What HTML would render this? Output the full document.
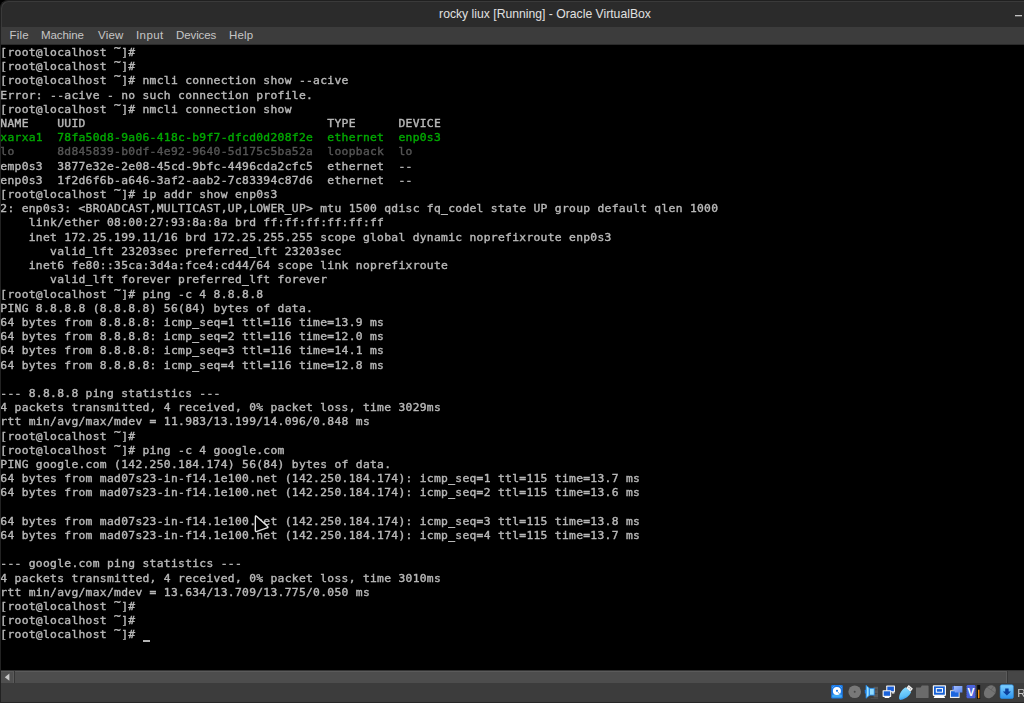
<!DOCTYPE html>
<html lang="en">
<head>
<meta charset="utf-8">
<title>rocky liux [Running] - Oracle VirtualBox</title>
<style>
html,body{margin:0;padding:0;background:#080808;}
body{width:1024px;height:703px;position:relative;overflow:hidden;font-family:"Liberation Sans","DejaVu Sans",sans-serif;}
#win{position:absolute;left:0;top:0;width:1024px;height:703px;background:#000;overflow:hidden;}
#titlebar{position:absolute;left:0;top:0;width:1100px;height:27px;background:#2b2b2b;border-top-left-radius:8px;border-top:1px solid #202020;border-left:1px solid #202020;box-sizing:border-box;box-shadow:inset 1px 1px 0 #3a3a3a;}
#title{position:absolute;left:0;top:0;width:1088px;height:26px;line-height:27px;text-align:center;color:#e0e0e0;font-size:12.2px;}
#minbtn{position:absolute;left:1014px;top:14px;width:7px;height:2px;background:linear-gradient(#c2c2c2 50%,#5c5c5c 50%);}
#menubar{position:absolute;left:0;top:27px;width:1024px;height:18px;background:#3c3c3c;border-bottom:1px solid #2a2a2a;box-sizing:border-box;}
#menubar span{position:absolute;top:-1px;line-height:18px;font-size:11.5px;color:#c6c6c6;letter-spacing:0.2px;}
#leftedge{position:absolute;left:0;top:26px;width:1px;height:677px;background:#222;}
#screen{position:absolute;left:1px;top:45px;width:1023px;height:625px;background:#000;overflow:hidden;}
#txt{position:absolute;left:0;top:0;width:1023px;height:625px;will-change:transform;}
.ln{position:absolute;left:-0.7px;white-space:pre;font-family:"DejaVu Sans Mono", "Liberation Mono", monospace;font-size:11.300px;letter-spacing:0.3078px;line-height:14.207px;height:14.207px;font-weight:normal;-webkit-text-stroke:0.4px currentColor;}
.t{position:relative;top:-4px;}
.w{color:#b8b8b8;}
.g{color:#00a800;}
.d{color:#555555;}
#cur{position:absolute;left:141.8px;top:594.5px;width:7px;height:2px;background:#b4b4b4;}
#hscroll{position:absolute;left:1px;top:670px;width:1023px;height:13px;background:#464646;border-top:1px solid #333;box-sizing:border-box;}
#hbtn{position:absolute;left:0;top:0;width:13px;height:12px;background:#4f4f4f;box-sizing:border-box;border-top:1px solid #5b5b5b;border-right:1px solid #5b5b5b;}
#hsep{position:absolute;left:13px;top:0;width:1px;height:12px;background:#363636;}
#hthumb{position:absolute;left:14px;top:0;width:992px;height:12px;background:#4d4d4d;box-sizing:border-box;border-top:1px solid #5b5b5b;border-right:1px solid #5b5b5b;}
#hend{position:absolute;left:1006px;top:0;width:1px;height:12px;background:#363636;}
#status{position:absolute;left:1px;top:683px;width:1023px;height:19px;background:#3c3c3c;}
#botedge{position:absolute;left:0;top:702px;width:1024px;height:1px;background:#262626;}
</style>
</head>
<body>
<div id="win">
<div id="titlebar"><div id="title">rocky liux [Running] - Oracle VirtualBox</div><div id="minbtn"></div></div>
<div id="menubar"><span style="left:9.5px">File</span><span style="left:41px;letter-spacing:-0.1px">Machine</span><span style="left:98px">View</span><span style="left:136px;letter-spacing:0.4px">Input</span><span style="left:176px;letter-spacing:-0.1px">Devices</span><span style="left:229px">Help</span></div>
<div id="screen"><div id="txt">
<div class="ln w" style="top:1.00px">[root@localhost <span class="t">~</span>]#</div>
<div class="ln w" style="top:15.21px">[root@localhost <span class="t">~</span>]#</div>
<div class="ln w" style="top:29.41px">[root@localhost <span class="t">~</span>]# nmcli connection show --acive</div>
<div class="ln w" style="top:43.62px">Error: --acive - no such connection profile.</div>
<div class="ln w" style="top:57.83px">[root@localhost <span class="t">~</span>]# nmcli connection show</div>
<div class="ln w" style="top:72.03px">NAME    UUID                                  TYPE      DEVICE</div>
<div class="ln g" style="top:86.24px">xarxa1  78fa50d8-9a06-418c-b9f7-dfcd0d208f2e  ethernet  enp0s3</div>
<div class="ln d" style="top:100.45px">lo      8d845839-b0df-4e92-9640-5d175c5ba52a  loopback  lo</div>
<div class="ln w" style="top:114.66px">emp0s3  3877e32e-2e08-45cd-9bfc-4496cda2cfc5  ethernet  --</div>
<div class="ln w" style="top:128.86px">enp0s3  1f2d6f6b-a646-3af2-aab2-7c83394c87d6  ethernet  --</div>
<div class="ln w" style="top:143.07px">[root@localhost <span class="t">~</span>]# ip addr show enp0s3</div>
<div class="ln w" style="top:157.28px">2: enp0s3: &lt;BROADCAST,MULTICAST,UP,LOWER_UP&gt; mtu 1500 qdisc fq_codel state UP group default qlen 1000</div>
<div class="ln w" style="top:171.48px">    link/ether 08:00:27:93:8a:8a brd ff:ff:ff:ff:ff:ff</div>
<div class="ln w" style="top:185.69px">    inet 172.25.199.11/16 brd 172.25.255.255 scope global dynamic noprefixroute enp0s3</div>
<div class="ln w" style="top:199.90px">       valid_lft 23203sec preferred_lft 23203sec</div>
<div class="ln w" style="top:214.11px">    inet6 fe80::35ca:3d4a:fce4:cd44/64 scope link noprefixroute</div>
<div class="ln w" style="top:228.31px">       valid_lft forever preferred_lft forever</div>
<div class="ln w" style="top:242.52px">[root@localhost <span class="t">~</span>]# ping -c 4 8.8.8.8</div>
<div class="ln w" style="top:256.73px">PING 8.8.8.8 (8.8.8.8) 56(84) bytes of data.</div>
<div class="ln w" style="top:270.93px">64 bytes from 8.8.8.8: icmp_seq=1 ttl=116 time=13.9 ms</div>
<div class="ln w" style="top:285.14px">64 bytes from 8.8.8.8: icmp_seq=2 ttl=116 time=12.0 ms</div>
<div class="ln w" style="top:299.35px">64 bytes from 8.8.8.8: icmp_seq=3 ttl=116 time=14.1 ms</div>
<div class="ln w" style="top:313.55px">64 bytes from 8.8.8.8: icmp_seq=4 ttl=116 time=12.8 ms</div>
<div class="ln w" style="top:341.97px">--- 8.8.8.8 ping statistics ---</div>
<div class="ln w" style="top:356.18px">4 packets transmitted, 4 received, 0% packet loss, time 3029ms</div>
<div class="ln w" style="top:370.38px">rtt min/avg/max/mdev = 11.983/13.199/14.096/0.848 ms</div>
<div class="ln w" style="top:384.59px">[root@localhost <span class="t">~</span>]#</div>
<div class="ln w" style="top:398.80px">[root@localhost <span class="t">~</span>]# ping -c 4 google.com</div>
<div class="ln w" style="top:413.00px">PING google.com (142.250.184.174) 56(84) bytes of data.</div>
<div class="ln w" style="top:427.21px">64 bytes from mad07s23-in-f14.1e100.net (142.250.184.174): icmp_seq=1 ttl=115 time=13.7 ms</div>
<div class="ln w" style="top:441.42px">64 bytes from mad07s23-in-f14.1e100.net (142.250.184.174): icmp_seq=2 ttl=115 time=13.6 ms</div>
<div class="ln w" style="top:469.83px">64 bytes from mad07s23-in-f14.1e100.net (142.250.184.174): icmp_seq=3 ttl=115 time=13.8 ms</div>
<div class="ln w" style="top:484.04px">64 bytes from mad07s23-in-f14.1e100.net (142.250.184.174): icmp_seq=4 ttl=115 time=13.7 ms</div>
<div class="ln w" style="top:512.45px">--- google.com ping statistics ---</div>
<div class="ln w" style="top:526.66px">4 packets transmitted, 4 received, 0% packet loss, time 3010ms</div>
<div class="ln w" style="top:540.87px">rtt min/avg/max/mdev = 13.634/13.709/13.775/0.050 ms</div>
<div class="ln w" style="top:555.07px">[root@localhost <span class="t">~</span>]#</div>
<div class="ln w" style="top:569.28px">[root@localhost <span class="t">~</span>]#</div>
<div class="ln w" style="top:583.49px">[root@localhost <span class="t">~</span>]#</div>
</div><div id="cur"></div>
<svg id="mouse" width="20" height="22" viewBox="0 0 20 22" style="position:absolute;left:252px;top:468px"><path d="M3.73 3.42 Q2.40 2.20 2.39 4.00 L2.31 17.20 Q2.30 19.00 4.00 18.42 L14.00 14.98 Q15.70 14.40 14.37 13.18 Z" fill="#000" stroke="#e4e4e4" stroke-width="1.35" stroke-linejoin="round"/></svg>
</div>
<div id="hscroll"><div id="hbtn"><svg width="13" height="12" viewBox="0 0 13 12" style="position:absolute;left:0;top:0"><path d="M8.4 1.6 L3.8 5.2 L8.4 8.8 Z" fill="#c8c8c8"/></svg></div><div id="hsep"></div><div id="hthumb"></div><div id="hend"></div></div>
<div id="status"></div>
<svg id="icons" width="224" height="20" viewBox="800 683 224 20" style="position:absolute;left:800px;top:683px">
<defs>
<linearGradient id="gb" x1="0" y1="0" x2="0" y2="1"><stop offset="0" stop-color="#63c0fa"/><stop offset="1" stop-color="#1f86ea"/></linearGradient>
<linearGradient id="gs" x1="0" y1="0" x2="1" y2="0"><stop offset="0" stop-color="#2a8ff0"/><stop offset="0.35" stop-color="#a5e6ff"/><stop offset="1" stop-color="#3aa0f4"/></linearGradient>
<linearGradient id="gu" x1="0" y1="0" x2="1" y2="1"><stop offset="0" stop-color="#8fdcff"/><stop offset="0.6" stop-color="#5cc0f8"/><stop offset="1" stop-color="#1b7fe6"/></linearGradient>
<linearGradient id="gk" x1="0" y1="0" x2="0" y2="1"><stop offset="0" stop-color="#7fd0ff"/><stop offset="1" stop-color="#2b93ee"/></linearGradient>
<linearGradient id="gc" x1="0" y1="0" x2="1" y2="1"><stop offset="0" stop-color="#a9c4ff"/><stop offset="1" stop-color="#5a86f0"/></linearGradient>
</defs>
<!-- hard disk -->
<rect x="831.2" y="685" width="11.6" height="13.5" rx="1.2" fill="#1b78e6"/>
<rect x="832.2" y="694.6" width="9.6" height="3" rx="0.8" fill="#3fa9f5"/>
<path d="M832 688 l2.4 -2.4 M842 688 l-2.4 -2.4" stroke="#5fb4f6" stroke-width="0.7"/>
<circle cx="836.9" cy="691" r="4" fill="#ffffff"/>
<circle cx="837" cy="690.8" r="1.1" fill="#1b78e6"/>
<path d="M837.5 691.5 L839.8 694.2" stroke="#5aa6ee" stroke-width="0.9" fill="none"/>
<!-- optical disk -->
<circle cx="854.7" cy="691.7" r="6.3" fill="#787878"/>
<circle cx="854.7" cy="691.7" r="1" fill="#484848"/>
<!-- audio -->
<rect x="873.6" y="686.8" width="4.4" height="10.6" fill="#5a5a5a"/>
<path d="M874.4 689.8h3M874.4 693.6h3" stroke="#424242" stroke-width="0.9"/>
<rect x="870.6" y="698" width="7.6" height="0.9" fill="#4e4e4e"/>
<path d="M866 685.2 L869.6 688.2 L869.6 695.2 L866 698.3 Z" fill="url(#gs)" stroke="#2189ec" stroke-width="0.7" stroke-linejoin="round"/>
<rect x="869.6" y="688.3" width="4.6" height="6.8" fill="#93dcff" stroke="#2189ec" stroke-width="0.8"/>
<rect x="864.8" y="689.8" width="1.3" height="3.8" rx="0.5" fill="#1f7fe6"/>
<!-- network -->
<rect x="886.2" y="685.6" width="8.8" height="6.6" rx="0.6" fill="#f2f2f2"/>
<rect x="887.3" y="686.6" width="6.6" height="4.6" fill="#1a5fd8"/>
<rect x="892" y="692" width="2.4" height="1.6" fill="#d8d8d8"/>
<rect x="882.6" y="690.2" width="8.6" height="6.7" rx="0.6" fill="#f6f6f6"/>
<rect x="883.7" y="691.3" width="6.4" height="4.5" fill="#1a63dc"/>
<rect x="884.6" y="696.9" width="4.8" height="1.1" fill="#ffffff"/>
<!-- usb -->
<g transform="rotate(42 905.5 692.9)">
<rect x="902.7" y="684.9" width="5.6" height="4.2" fill="#f4f4f4"/>
<rect x="903.9" y="686" width="1.1" height="1.1" fill="#9a9a9a"/><rect x="906" y="686" width="1.1" height="1.1" fill="#9a9a9a"/>
<path d="M901.7 688.7 h7.6 c1.1 4 0.5 8.8 -2.5 12.4 c-0.7 0.9 -1.9 0.9 -2.6 0 c-3 -3.6 -3.6 -8.4 -2.5 -12.4z" fill="url(#gu)"/>
</g>
<!-- shared folder -->
<path d="M916 687.6 h4.6 l1.2 -2 h6 a0.8 0.8 0 0 1 0.8 0.8 v11 a0.6 0.6 0 0 1 -0.6 0.6 h-11.4 a0.6 0.6 0 0 1 -0.6 -0.6 z" fill="#6b6b6b"/>
<!-- display -->
<rect x="932.8" y="685.3" width="13.2" height="10.6" rx="0.8" fill="#f4f4f4"/>
<rect x="934" y="686.4" width="10.8" height="8.3" fill="#1560d6"/>
<rect x="936.3" y="688.6" width="6.2" height="3.6" fill="none" stroke="#ffffff" stroke-width="1"/>
<path d="M934.6 695.9 h9.6 l1 2.1 h-11.6 z" fill="#ffffff"/>
<!-- recording -->
<rect x="950" y="690.3" width="9.6" height="7.8" rx="0.5" fill="#f0f0f0"/>
<rect x="950.9" y="691.2" width="7.8" height="5.6" fill="#1c66de"/>
<path d="M952.6 686.6 l2.2 -0.9 v0.4 h7.6 v6.3 h-7.6 v-1.2 l-2.2 -0.9 z" fill="url(#gc)"/>
<rect x="952.6" y="686.2" width="1.2" height="3.4" fill="#2a50c8"/>
<!-- cpu V -->
<rect x="966.6" y="685" width="8.8" height="13.2" rx="1" fill="#4a62da"/>
<path d="M966 686.5h10M966 688.5h10M966 690.5h10M966 692.5h10M966 694.5h10M966 696.5h10" stroke="#3a4fc4" stroke-width="0.7" stroke-dasharray="0.8 8.6"/>
<text x="971" y="695.6" font-family="Liberation Sans, DejaVu Sans, sans-serif" font-size="10.5" font-weight="bold" fill="#ffffff" text-anchor="middle">V</text>
<rect x="977.2" y="685" width="3" height="14" fill="#0a0a0a"/>
<rect x="978" y="689.7" width="1.5" height="8.6" fill="#f08a10"/>
<!-- mouse -->
<g transform="rotate(35 990 691.6)">
<ellipse cx="990" cy="691.8" rx="5.4" ry="7" fill="#737373"/>
<path d="M984.7 689.6 h10.6 M990 684.8 v4.8" stroke="#606060" stroke-width="0.8" fill="none"/>
</g>
<!-- keyboard capture -->
<rect x="1000.2" y="684.8" width="13.2" height="13.7" rx="1.6" fill="url(#gk)" stroke="#2a8de8" stroke-width="0.6"/>
<path d="M1005.2 688.4 h3.4 v3 h2.4 l-4.1 4.1 l-4.1 -4.1 h2.4 z" fill="#0a3f9c"/>
<text x="1017.2" y="697" font-family="Liberation Sans, DejaVu Sans, sans-serif" font-size="11.5" fill="#c8c8c8">Right Ctrl</text>
</svg>

<div id="leftedge"></div>
<div id="botedge"></div>
</div>
</body>
</html>
